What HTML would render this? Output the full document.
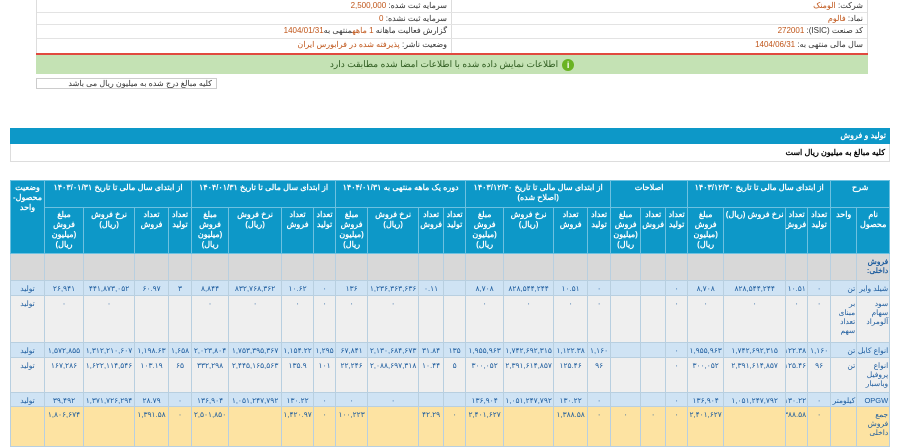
<!DOCTYPE html>
<html><head><meta charset="utf-8"><style>
*{margin:0;padding:0;box-sizing:border-box}
body{width:900px;height:442px;overflow:hidden;background:#fff;font-family:Tahoma,"Liberation Sans","Noto Sans CJK SC",sans-serif;font-size:8px;color:#333;position:relative}
.info{position:absolute;left:36px;top:0;width:832px;border-left:1px solid #ddd;border-right:1px solid #ddd}
.row{display:flex;direction:rtl;height:13px;border-bottom:1px solid #e3e3e3;line-height:12px;font-size:8px}
.row div{width:50%;padding-right:4px}
.row div+div{border-right:1px solid #ddd}
.v{color:#c0561a}
.red{position:absolute;left:36px;top:53px;width:832px;height:2px;background:#e04a3f}
.green{position:absolute;left:36px;top:55px;width:832px;height:19px;background:#c4e2b4;direction:rtl;text-align:center;line-height:19px;font-size:9px;color:#2d5a1e}
.green i{display:inline-block;width:12px;height:12px;border-radius:50%;background:#6ab323;color:#fff;font-style:normal;font-weight:bold;line-height:12px;font-size:9px;vertical-align:middle;margin-left:4px}
.note{position:absolute;left:36px;top:78px;width:181px;height:11px;border:1px solid #ccc;direction:rtl;font-size:8px;line-height:9px;padding-right:4px}
.sh{position:absolute;left:10px;top:128px;width:880px;height:16px;background:#0d98c8;color:#fff;direction:rtl;font-weight:bold;font-size:8px;line-height:16px;padding-right:4px}
.sh2{position:absolute;left:10px;top:144px;width:880px;height:18px;border:1px solid #ddd;border-top:0;direction:rtl;font-weight:bold;font-size:8px;line-height:17px;padding-right:4px;color:#000}
table{position:absolute;left:10px;top:180px;width:879px;border-collapse:collapse;table-layout:fixed;direction:rtl}
td,th{border:1px solid #b8cfe0;font-size:7px;padding:1px 1px;overflow:hidden;line-height:9px;vertical-align:top}
th{background:#0d98c8;color:#fff;font-weight:bold;border-color:#6ec1e0;text-align:center;padding-top:2px;font-size:8px;line-height:10px}
td{color:#1d5c9e;text-align:center;white-space:nowrap;font-size:7.5px;padding-top:3px}
td.n,td.u{text-align:right;white-space:normal;font-size:7.5px}
tr.g td{background:#d8d8d8}
tr.b td{background:#cfe3f4}
tr.w td{background:#efefef}
tr.y td{background:#fde3a2}
</style></head><body>
<div class="info">
<div class="row"><div>شرکت: <span class="v">الومنک</span></div><div>سرمایه ثبت شده: <span class="v">2,500,000</span></div></div>
<div class="row" style="height:12px"><div>نماد: <span class="v">فالوم</span></div><div>سرمایه ثبت نشده: <span class="v">0</span></div></div>
<div class="row" style="height:14px"><div>کد صنعت (ISIC): <span class="v">272001</span></div><div>گزارش فعالیت ماهانه <span class="v">1 ماهه</span>منتهی به<span class="v">1404/01/31</span></div></div>
<div class="row" style="height:14px;border-bottom:0"><div>سال مالی منتهی به: <span class="v">1404/06/31</span></div><div>وضعیت ناشر: <span class="v">پذیرفته شده در فرابورس ایران</span></div></div>
</div>
<div class="red"></div>
<div class="green"><i>i</i>اطلاعات نمایش داده شده با اطلاعات امضا شده مطابقت دارد</div>
<div class="note">کلیه مبالغ درج شده به میلیون ریال می باشد</div>
<div class="sh">تولید و فروش</div>
<div class="sh2">کلیه مبالغ به میلیون ریال است</div>
<table>
<colgroup>
<col style="width:33px"><col style="width:26px"><col style="width:23px"><col style="width:22px"><col style="width:62px"><col style="width:36px">
<col style="width:22px"><col style="width:25px"><col style="width:30px">
<col style="width:23px"><col style="width:34px"><col style="width:50px"><col style="width:38px">
<col style="width:22px"><col style="width:25px"><col style="width:51px"><col style="width:32px">
<col style="width:22px"><col style="width:32px"><col style="width:53px"><col style="width:37px">
<col style="width:23px"><col style="width:34px"><col style="width:51px"><col style="width:39px">
<col style="width:34px">
</colgroup>
<tr style="height:27px">
<th colspan="2">شرح</th><th colspan="4">از ابتدای سال مالی تا تاریخ ۱۴۰۳/۱۲/۳۰</th><th colspan="3">اصلاحات</th>
<th colspan="4">از ابتدای سال مالی تا تاریخ ۱۴۰۳/۱۲/۳۰ (اصلاح شده)</th><th colspan="4">دوره یک ماهه منتهی به ۱۴۰۴/۰۱/۳۱</th>
<th colspan="4">از ابتدای سال مالی تا تاریخ ۱۴۰۴/۰۱/۳۱</th><th colspan="4">از ابتدای سال مالی تا تاریخ ۱۴۰۳/۰۱/۳۱</th>
<th rowspan="2">وضعیت محصول-واحد</th></tr>
<tr style="height:46px">
<th>نام محصول</th><th>واحد</th><th>تعداد تولید</th><th>تعداد فروش</th><th>نرخ فروش (ریال)</th><th>مبلغ فروش (میلیون ریال)</th>
<th>تعداد تولید</th><th>تعداد فروش</th><th>مبلغ فروش (میلیون ریال)</th>
<th>تعداد تولید</th><th>تعداد فروش</th><th>نرخ فروش (ریال)</th><th>مبلغ فروش (میلیون ریال)</th>
<th>تعداد تولید</th><th>تعداد فروش</th><th>نرخ فروش (ریال)</th><th>مبلغ فروش (میلیون ریال)</th>
<th>تعداد تولید</th><th>تعداد فروش</th><th>نرخ فروش (ریال)</th><th>مبلغ فروش (میلیون ریال)</th>
<th>تعداد تولید</th><th>تعداد فروش</th><th>نرخ فروش (ریال)</th><th>مبلغ فروش (میلیون ریال)</th>
</tr>
<tr class="g" style="height:27px"><td class="n" style="font-weight:bold">فروش داخلی:</td><td></td><td></td><td></td><td></td><td></td><td></td><td></td><td></td><td></td><td></td><td></td><td></td><td></td><td></td><td></td><td></td><td></td><td></td><td></td><td></td><td></td><td></td><td></td><td></td><td></td></tr>
<tr class="b" style="height:15px"><td class="n" style="white-space:nowrap">شیلد وایر</td><td class="u">تن</td><td>۰</td><td>۱۰.۵۱</td><td>۸۲۸,۵۴۴,۲۴۴</td><td>۸,۷۰۸</td><td>۰</td><td></td><td></td><td>۰</td><td>۱۰.۵۱</td><td>۸۲۸,۵۴۴,۲۴۴</td><td>۸,۷۰۸</td><td></td><td>۰.۱۱</td><td>۱,۲۳۶,۳۶۳,۶۳۶</td><td>۱۳۶</td><td>۰</td><td>۱۰.۶۲</td><td>۸۳۲,۷۶۸,۳۶۲</td><td>۸,۸۴۴</td><td>۳</td><td>۶۰.۹۷</td><td>۴۴۱,۸۷۳,۰۵۲</td><td>۲۶,۹۴۱</td><td>تولید</td></tr>
<tr class="w" style="height:47px"><td class="n">سود سهام آلومراد</td><td class="u">بر مبنای تعداد سهم</td><td>۰</td><td>۰</td><td>۰</td><td>۰</td><td>۰</td><td></td><td></td><td>۰</td><td>۰</td><td>۰</td><td>۰</td><td></td><td></td><td>۰</td><td>۰</td><td>۰</td><td>۰</td><td>۰</td><td>۰</td><td></td><td></td><td>۰</td><td>۰</td><td>تولید</td></tr>
<tr class="b" style="height:15px"><td class="n" style="white-space:nowrap">انواع کابل</td><td class="u">تن</td><td>۱,۱۶۰</td><td>۱,۱۲۲.۳۸</td><td>۱,۷۴۲,۶۹۲,۳۱۵</td><td>۱,۹۵۵,۹۶۳</td><td>۰</td><td></td><td></td><td>۱,۱۶۰</td><td>۱,۱۲۲.۳۸</td><td>۱,۷۴۲,۶۹۲,۳۱۵</td><td>۱,۹۵۵,۹۶۳</td><td>۱۳۵</td><td>۳۱.۸۴</td><td>۲,۱۳۰,۶۸۴,۶۷۳</td><td>۶۷,۸۴۱</td><td>۱,۲۹۵</td><td>۱,۱۵۴.۲۲</td><td>۱,۷۵۳,۳۹۵,۳۶۷</td><td>۲,۰۲۳,۸۰۴</td><td>۱,۶۵۸</td><td>۱,۱۹۸.۶۳</td><td>۱,۳۱۲,۲۱۰,۶۰۷</td><td>۱,۵۷۲,۸۵۵</td><td>تولید</td></tr>
<tr class="w" style="height:35px"><td class="n">انواع پروفیل وباسبار</td><td class="u">تن</td><td>۹۶</td><td>۱۲۵.۴۶</td><td>۲,۳۹۱,۶۱۴,۸۵۷</td><td>۳۰۰,۰۵۲</td><td>۰</td><td></td><td></td><td>۹۶</td><td>۱۲۵.۴۶</td><td>۲,۳۹۱,۶۱۴,۸۵۷</td><td>۳۰۰,۰۵۲</td><td>۵</td><td>۱۰.۴۴</td><td>۲,۰۸۸,۶۹۷,۳۱۸</td><td>۲۲,۲۴۶</td><td>۱۰۱</td><td>۱۳۵.۹</td><td>۲,۴۴۵,۱۶۵,۵۶۳</td><td>۳۳۲,۲۹۸</td><td>۶۵</td><td>۱۰۳.۱۹</td><td>۱,۶۲۲,۱۱۴,۵۴۶</td><td>۱۶۷,۲۸۶</td><td>تولید</td></tr>
<tr class="b" style="height:14px"><td class="n">OPGW</td><td class="u" style="white-space:nowrap">کیلومتر</td><td>۰</td><td>۱۳۰.۲۲</td><td>۱,۰۵۱,۲۴۷,۷۹۲</td><td>۱۳۶,۹۰۴</td><td>۰</td><td></td><td></td><td>۰</td><td>۱۳۰.۲۲</td><td>۱,۰۵۱,۲۴۷,۷۹۲</td><td>۱۳۶,۹۰۴</td><td></td><td></td><td>۰</td><td>۰</td><td>۰</td><td>۱۳۰.۲۲</td><td>۱,۰۵۱,۲۴۷,۷۹۲</td><td>۱۳۶,۹۰۴</td><td>۰</td><td>۲۸.۷۹</td><td>۱,۳۷۱,۷۲۶,۲۹۴</td><td>۳۹,۴۹۲</td><td>تولید</td></tr>
<tr class="y" style="height:40px"><td class="n">جمع فروش داخلی</td><td></td><td>۰</td><td>۱,۳۸۸.۵۸</td><td></td><td>۲,۴۰۱,۶۲۷</td><td>۰</td><td>۰</td><td>۰</td><td>۰</td><td>۱,۳۸۸.۵۸</td><td></td><td>۲,۴۰۱,۶۲۷</td><td>۰</td><td>۴۲.۲۹</td><td></td><td>۱۰۰,۲۲۳</td><td>۰</td><td>۱,۴۲۰.۹۷</td><td></td><td>۲,۵۰۱,۸۵۰</td><td>۰</td><td>۱,۳۹۱.۵۸</td><td></td><td>۱,۸۰۶,۶۷۴</td><td></td></tr>
</table>
</body></html>
